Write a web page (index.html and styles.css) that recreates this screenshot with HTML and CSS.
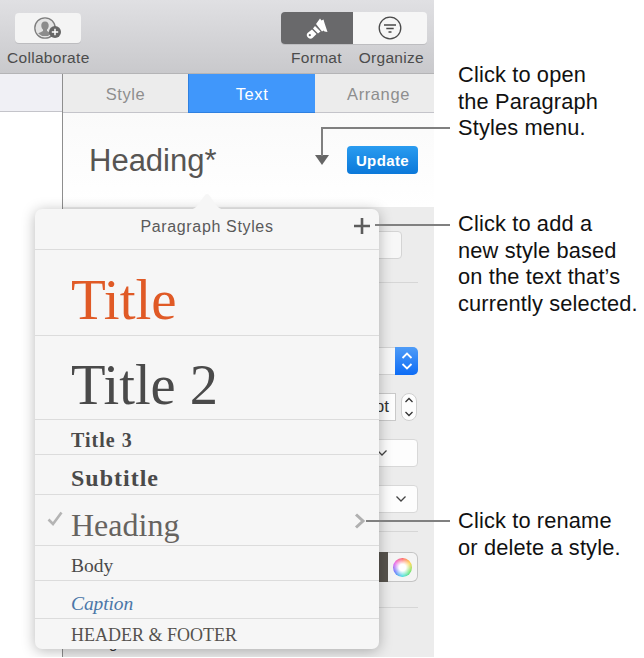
FILE: index.html
```html
<!DOCTYPE html>
<html lang="en">
<head>
<meta charset="utf-8">
<title>Paragraph Styles</title>
<link rel="stylesheet" href="styles.css">
</head>
<body>
<div class="figure">
  <div class="app">
    <header class="toolbar">
      <div class="tool collaborate">
        <div class="btn btn-collab">
          <svg width="30" height="24" viewBox="0 0 30 24">
            <circle cx="12" cy="12" r="10.2" fill="#e4e4e4" stroke="#7d7d7d" stroke-width="1.3"/>
            <path d="M12 5.5c2.6 0 3.9 2 3.7 4.4-.1 1.500-.8 2.900-1.700 3.700v1.300c1 .8 3.600 1.400 4.800 2.500a10 10 0 0 1-13.600 0c1.200-1.100 3.800-1.700 4.800-2.500v-1.300c-.9-.8-1.600-2.200-1.700-3.700-.2-2.400 1.100-4.400 3.700-4.400z" fill="#8c8c8c"/>
            <circle cx="22" cy="16" r="6" fill="#666"/>
            <path d="M22 12.800v6.400M18.800 16h6.400" stroke="#fff" stroke-width="1.500"/>
          </svg>
        </div>
        <span class="tool-label">Collaborate</span>
      </div>
      <div class="tool-group">
        <div class="segments">
          <div class="seg seg-on">
            <svg width="22" height="21" viewBox="0 0 22 21">
              <path d="M10 6 14 .5l1.500 2 2-1 1 3.500 3 9-3-.5-1-1-1.500 1z" fill="#fff"/>
              <path d="M9 8l5.500 5.500-2.500 2-5-5z" fill="#fff"/>
              <path d="M6 11.500l4.500 4.500-4 4c-1 1-3 1-4 0l-1-1c-1-1-1-3 0-4z" fill="#fff"/>
              <circle cx="3.800" cy="17.200" r="1.100" fill="#69696b"/>
            </svg>
          </div>
          <div class="seg">
            <svg width="24" height="24" viewBox="0 0 24 24" fill="none" stroke="#4a4a4a" stroke-width="1.300">
              <circle cx="12" cy="12" r="10.800"/>
              <path d="M6 9h12M8.300 12.500h7.400M10.500 16h3"/>
            </svg>
          </div>
        </div>
        <div class="seg-labels">
          <span class="tool-label">Format</span>
          <span class="tool-label">Organize</span>
        </div>
      </div>
    </header>

    <div class="body-row">
      <aside class="canvas-col">
        <div class="canvas-head"></div>
      </aside>
      <section class="sidebar">
        <nav class="tabs">
          <div class="tab tab-style">Style</div>
          <div class="tab tab-on">Text</div>
          <div class="tab tab-arrange">Arrange</div>
        </nav>
        <div class="style-head">
          <div class="style-name">Heading*</div>
          <div class="style-arrow"></div>
          <div class="update">Update</div>
        </div>
        <div class="controls">
          <div class="ctl-btn"></div>
          <hr class="rule rule-a">
          <div class="select-row">
            <div class="select-body"></div>
            <div class="select-step">
              <svg width="14" height="20" viewBox="0 0 14 20" fill="none" stroke="#fff" stroke-width="1.800"><path d="M2.500 7 7 2.500 11.500 7M2.500 13 7 17.500 11.500 13"/></svg>
            </div>
          </div>
          <div class="size-row">
            <div class="size-field">pt</div>
            <div class="stepper">
              <svg width="10" height="22" viewBox="0 0 10 22" fill="none" stroke="#333" stroke-width="1.300"><path d="M1.500 6 5 2.500 8.500 6M1.500 16 5 19.500 8.500 16"/></svg>
            </div>
          </div>
          <div class="drop drop-a"><svg width="12" height="8" viewBox="0 0 12 8" fill="none" stroke="#444" stroke-width="1.300"><path d="M1.500 1.500 6 6l4.500-4.500"/></svg></div>
          <div class="drop drop-b"><svg width="12" height="8" viewBox="0 0 12 8" fill="none" stroke="#444" stroke-width="1.300"><path d="M1.500 1.500 6 6l4.500-4.500"/></svg></div>
          <hr class="rule rule-b">
          <div class="color-row">
            <div class="swatch"></div>
            <div class="wheel-box"><div class="wheel"></div></div>
          </div>
          <hr class="rule rule-c">
          <div class="clip-text">Image</div>
        </div>
      </section>
    </div>

    <div class="popover">
      <svg class="pop-tip" width="44" height="18" viewBox="0 0 44 18">
        <path d="M0 18c7 0 9-1 12-4L20 3c1-1.500 3-1.500 4 0l8 11c3 3 5 4 12 4z" fill="#f6f6f6"/>
      </svg>
      <div class="pop-head">
        <span>Paragraph Styles</span>
        <svg class="pop-plus" width="18" height="18" viewBox="0 0 18 18"><path d="M9 1v16M1 9h16" stroke="#5c5c5c" stroke-width="2.600"/></svg>
      </div>
      <ul class="pop-list">
        <li class="row r-title"><span>Title</span></li>
        <li class="row r-title2"><span>Title 2</span></li>
        <li class="row r-title3"><span>Title 3</span></li>
        <li class="row r-sub"><span>Subtitle</span></li>
        <li class="row r-heading">
          <svg class="check" width="16" height="15" viewBox="0 0 16 15" fill="none" stroke="#b4b4b4" stroke-width="2.600"><path d="M1.500 8.500 6 13 14.500 1.500"/></svg>
          <span>Heading</span>
          <svg class="chev" width="12" height="16" viewBox="0 0 12 16" fill="none" stroke="#b0b0b0" stroke-width="3"><path d="M2 1.500 9 8l-7 6.500"/></svg>
        </li>
        <li class="row r-body"><span>Body</span></li>
        <li class="row r-caption"><span>Caption</span></li>
        <li class="row r-footer"><span>HEADER &amp; FOOTER</span></li>
      </ul>
    </div>
  </div>

  <div class="line line-a-v"></div>
  <div class="line line-a-h"></div>
  <div class="line line-b"></div>
  <div class="line line-c"></div>
  <p class="note note-a">Click to open<br>the Paragraph<br>Styles menu.</p>
  <p class="note note-b">Click to add a<br>new style based<br>on the text that’s<br>currently selected.</p>
  <p class="note note-c">Click to rename<br>or delete a style.</p>
</div>
</body>
</html>
```

FILE: styles.css
```css
* { box-sizing: border-box; }
html, body { margin: 0; padding: 0; background: #fff; }
body { font-family: "Liberation Sans", Arial, sans-serif; overflow: hidden; }

.figure { position: relative; width: 644px; height: 658px; }
.app { position: relative; width: 434px; height: 657px; overflow: hidden; display: flex; flex-direction: column; background: #ececec; }

/* toolbar */
.toolbar {
  height: 74px; flex: none; display: flex; justify-content: space-between;
  padding: 12px 7px 0 7px;
  background: linear-gradient(#e0e0e3, #c9c9cc);
  border-bottom: 1px solid #b4b4b6;
}
.tool { display: flex; flex-direction: column; align-items: center; }
.btn-collab {
  width: 66px; height: 30px; margin-top: 1px; background: #f4f4f4; border-radius: 4px;
  display: flex; align-items: center; justify-content: center; box-shadow: 0 1px 0 #bdbdc0;
}
.tool-label { font-size: 15.500px; letter-spacing: .3px; line-height: 17px; color: #4c4c4c; margin-top: 6px; white-space: nowrap; }
.tool-group { display: flex; flex-direction: column; align-items: stretch; width: 146px; }
.segments { display: flex; height: 32px; border-radius: 4px; overflow: hidden; box-shadow: 0 1px 0 #bdbdc0; }
.seg { flex: 72 1 0; display: flex; align-items: center; justify-content: center; background: #f6f6f6; }
.seg + .seg { flex: 74 1 0; }
.seg-on { background: #69696b; }
.seg-labels { display: flex; justify-content: space-between; padding: 0 3px 0 10px; margin-top: -1px; }

.body-row { flex: 1; display: flex; min-height: 0; }
.canvas-col { width: 62px; flex: none; background: #fff; }
.canvas-head { height: 38px; background: #f0f0f5; border-bottom: 1px solid #c4c4ca; }

.sidebar { flex: 1; border-left: 1px solid #8e8e8e; display: flex; flex-direction: column; min-width: 0; }
.tabs { display: flex; height: 39px; flex: none; background: #ececec; border-bottom: 1px solid #c4c4ca; }
.tab { text-align: center; font-size: 16.500px; letter-spacing: .6px; line-height: 40px; color: #8e8e8e; }
.tab-style { width: 125px; flex: none; }
.tab-on { width: 127px; flex: none; background: #4097fb; color: #fff; border-left: 1px solid #2f80e0; border-bottom: 1px solid #2f80e0; height: 39px; }
.tab-arrange { flex: 1; padding-left: 8px; }

.style-head {
  height: 94px; flex: none; position: relative; display: flex; align-items: flex-start;
  background: linear-gradient(#fafafa, #fff); padding: 31px 16px 0 26px;
}
.style-name { font-size: 31px; line-height: 34px; color: #575553; }
.style-arrow {
  position: absolute; left: 252px; top: 42px; width: 0; height: 0;
  border-left: 7.500px solid transparent; border-right: 7.500px solid transparent; border-top: 10px solid #666;
}
.update {
  margin-left: auto; margin-top: 2px; width: 71px; height: 28px; border-radius: 4px;
  background: linear-gradient(#2a9cf0, #0b78d9); color: #fff; font-weight: bold; font-size: 15px;
  letter-spacing: .4px; line-height: 29px; text-align: center;
}

.controls { flex: 1; padding: 24px 16px 0 0; display: flex; flex-direction: column; align-items: flex-end; background: #ececec; min-height: 0; }
.ctl-btn { width: 120px; height: 28px; background: #f7f7f7; border: 1px solid #d4d4d4; border-radius: 4px; margin-right: 16px; }
.rule { border: 0; height: 1px; background: #d6d6d6; margin: 0; width: 100%; }
.rule-a { margin-top: 23px; }
.select-row { display: flex; height: 28px; width: 120px; margin-top: 64px; }
.select-body { flex: 1; background: #f7f7f7; border: 1px solid #d4d4d4; border-right: 0; }
.select-step { width: 23px; border-radius: 0 5px 5px 0; background: linear-gradient(#4f9cf7, #0d6cf5); display: flex; align-items: center; justify-content: center; }
.size-row { display: flex; align-items: stretch; gap: 5px; height: 28px; margin-top: 18px; margin-right: 1px; }
.size-field { width: 60px; background: #fdfdfd; border: 1px solid #c9c9c9; font-size: 17px; line-height: 26px; color: #333; text-align: right; padding-right: 6px; }
.stepper { width: 16px; border-radius: 8px; background: #fdfdfd; border: 1px solid #cfcfcf; display: flex; align-items: center; justify-content: center; }
.drop { width: 100px; height: 28px; background: #fdfdfd; border: 1px solid #d8d8d8; border-radius: 4px; display: flex; align-items: center; justify-content: flex-end; }
.drop-a { margin-top: 18px; padding-right: 29px; }
.drop-b { margin-top: 18px; padding-right: 10px; }
.rule-b { margin-top: 18px; }
.color-row { display: flex; height: 30px; margin-top: 20px; }
.swatch { width: 50px; background: #57534d; }
.wheel-box { width: 30px; background: #f4f4f4; border: 1px solid #c4c4c4; border-left: 0; border-radius: 0 6px 6px 0; display: flex; align-items: center; justify-content: center; }
.wheel { width: 19px; height: 19px; border-radius: 50%; background: radial-gradient(circle, #fff 25%, rgba(255,255,255,0) 72%), conic-gradient(#ff5a5a, #ffd23c, #5fe35f, #3cdcdc, #5a6cff, #e85ae8, #ff5a5a); }
.rule-c { margin-top: 25px; }
.clip-text { align-self: flex-start; margin: 26px 0 0 21px; font-size: 15px; line-height: 18px; color: #333; }

/* popover */
.popover {
  position: absolute; left: 35px; top: 209px; width: 344px; height: 440px;
  background: #f6f6f6; border-radius: 7px; box-shadow: 0 2px 14px rgba(0,0,0,.28);
  display: flex; flex-direction: column;
}
.pop-tip { position: absolute; left: 150px; top: -17px; }
.pop-head {
  position: relative; height: 41px; flex: none; text-align: center; font-size: 16px; letter-spacing: .65px;
  line-height: 36px; color: #5a5a5a; border-bottom: 1px solid #dcdcdc;
}
.pop-plus { position: absolute; left: 318px; top: 8px; }
.pop-list { list-style: none; margin: 0; padding: 0; display: flex; flex-direction: column; font-family: "Liberation Serif", "Times New Roman", serif; }
.row { position: relative; display: flex; align-items: center; padding-left: 36px; border-bottom: 1px solid #dcdcdc; white-space: nowrap; color: #4a4a4a; }
.row:last-child { border-bottom: 0; }
.r-title { height: 86px; font-size: 57px; color: #e05a26; padding-top: 14px; }
.r-title2 { height: 84px; font-size: 56.500px; padding-top: 14px; }
.r-title3 { height: 35px; font-size: 20px; font-weight: bold; letter-spacing: 1px; padding-top: 6px; }
.r-sub { height: 40px; font-size: 24px; font-weight: bold; letter-spacing: 1px; padding-top: 8px; }
.r-heading { height: 51px; font-size: 32px; color: #66635f; padding-top: 10px; }
.r-body { height: 35px; font-size: 19.500px; padding-top: 6px; }
.r-caption { height: 38px; font-size: 19.500px; font-style: italic; color: #4b76a8; letter-spacing: -.1px; padding-top: 9px; }
.r-footer { height: 31px; font-size: 18px; color: #55524e; padding-top: 2px; }
.check { position: absolute; left: 12px; top: 16px; }
.chev { position: absolute; left: 319px; top: 18px; }

/* callouts */
.line { position: absolute; background: #808080; }
.line-a-v { left: 321px; top: 128px; width: 2px; height: 28px; }
.line-a-h { left: 321px; top: 127px; width: 129px; height: 2px; }
.line-b { left: 375px; top: 224px; width: 75px; height: 2px; }
.line-c { left: 366px; top: 520px; width: 84px; height: 2px; }
.note { position: absolute; left: 458px; margin: 0; font-size: 21.800px; letter-spacing: .15px; line-height: 26.500px; color: #111; white-space: nowrap; }
.note-a { top: 62px; }
.note-b { top: 211px; }
.note-c { top: 508px; }
```
